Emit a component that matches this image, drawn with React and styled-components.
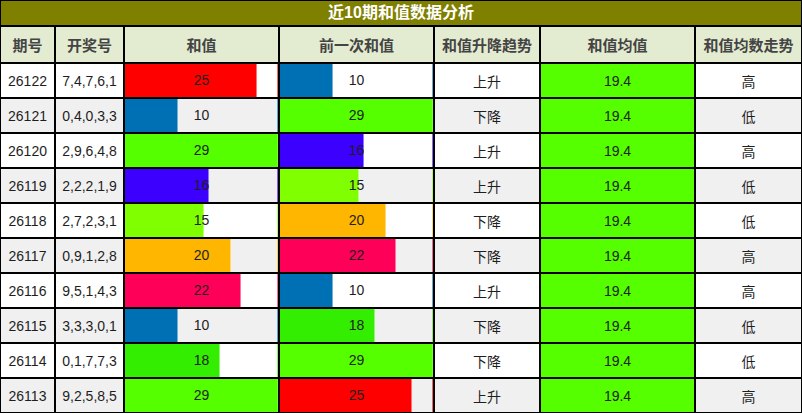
import React from 'react'
import styled, { createGlobalStyle } from 'styled-components'

const GlobalStyle = createGlobalStyle`
  html, body {
    margin: 0;
    padding: 0;
    background: #fff;
  }
  body {
    font-family: 'Liberation Sans', 'Noto Sans CJK SC', sans-serif;
  }
`

const MAX = 29

const barColors = {
  10: '#0070b4',
  15: '#80ff00',
  16: '#3c00ff',
  18: '#33ee00',
  20: '#ffb600',
  22: '#ff0058',
  25: '#ff0000',
  29: '#55ff00',
}

const rows = [
  ['26122', '7,4,7,6,1', 25, 10, '上升', '高'],
  ['26121', '0,4,0,3,3', 10, 29, '下降', '低'],
  ['26120', '2,9,6,4,8', 29, 16, '上升', '高'],
  ['26119', '2,2,2,1,9', 16, 15, '上升', '低'],
  ['26118', '2,7,2,3,1', 15, 20, '下降', '低'],
  ['26117', '0,9,1,2,8', 20, 22, '下降', '高'],
  ['26116', '9,5,1,4,3', 22, 10, '上升', '高'],
  ['26115', '3,3,3,0,1', 10, 18, '下降', '低'],
  ['26114', '0,1,7,7,3', 18, 29, '下降', '低'],
  ['26113', '9,2,5,8,5', 29, 25, '上升', '高'],
]

const colWidths = [55, 69, 155, 155, 106, 155, 107]
const headers = ['期号', '开奖号', '和值', '前一次和值', '和值升降趋势', '和值均值', '和值均数走势']

const Table = styled.table`
  width: 802px;
  table-layout: fixed;
  border-collapse: separate;
  border-spacing: 0;
`

const TitleCell = styled.th`
  height: 24px;
  padding: 0;
  border: 1px solid #000;
  background: #808000;
  color: #fff;
  font-size: 16px;
  font-weight: bold;
  text-align: center;
  line-height: 24px;
`

const HeadCell = styled.th`
  height: 35px;
  padding: 0;
  border: 1px solid #000;
  background: #e3ebd0;
  color: #444;
  font-size: 15px;
  font-weight: bold;
  text-align: center;
  white-space: nowrap;
`

const Row = styled.tr`
  background: ${props => (props.$alt ? '#f0f0f0' : '#fff')};
`

const Cell = styled.td`
  height: 33px;
  padding: 0;
  border: 1px solid #000;
  color: #1e1e1e;
  font-size: 14px;
  text-align: center;
  background: ${props => props.$fill || 'transparent'};
`

const BarCell = styled.td`
  height: 33px;
  padding: 0;
  border: 1px solid #000;
  position: relative;
  overflow: hidden;
`

const Bar = styled.div`
  position: absolute;
  left: 0;
  top: 0;
  bottom: 0;
  background: ${props => props.$color};
  box-shadow: inset -1px 0 0 rgba(255, 255, 255, 0.45);
`

const EdgeLine = styled.div`
  position: absolute;
  right: 0;
  top: 0;
  bottom: 0;
  width: 1px;
  background: ${props => props.$color};
  opacity: 0.6;
`

const BarLabel = styled.span`
  position: relative;
  display: block;
  text-align: center;
  color: #1e1e1e;
  font-size: 14px;
  line-height: 33px;
`

const DataBar = ({ value }) => {
  const color = barColors[value]
  return (
    <BarCell>
      <Bar $color={color} style={{ width: `${(value / MAX) * 100}%` }} />
      <EdgeLine $color={color} />
      <BarLabel>{value}</BarLabel>
    </BarCell>
  )
}

const App = () => {
  return (
    <>
      <GlobalStyle />
      <Table>
        <colgroup>
          {colWidths.map((w, i) => (
            <col key={i} style={{ width: w }} />
          ))}
        </colgroup>
        <thead>
          <tr>
            <TitleCell colSpan={7}>近10期和值数据分析</TitleCell>
          </tr>
          <tr>
            {headers.map(h => (
              <HeadCell key={h}>{h}</HeadCell>
            ))}
          </tr>
        </thead>
        <tbody>
          {rows.map(([issue, nums, sum, prev, trend, level], i) => (
            <Row key={issue} $alt={i % 2 === 1}>
              <Cell>{issue}</Cell>
              <Cell>{nums}</Cell>
              <DataBar value={sum} />
              <DataBar value={prev} />
              <Cell>{trend}</Cell>
              <Cell $fill="#55ff00">19.4</Cell>
              <Cell>{level}</Cell>
            </Row>
          ))}
        </tbody>
      </Table>
    </>
  )
}

export default App
